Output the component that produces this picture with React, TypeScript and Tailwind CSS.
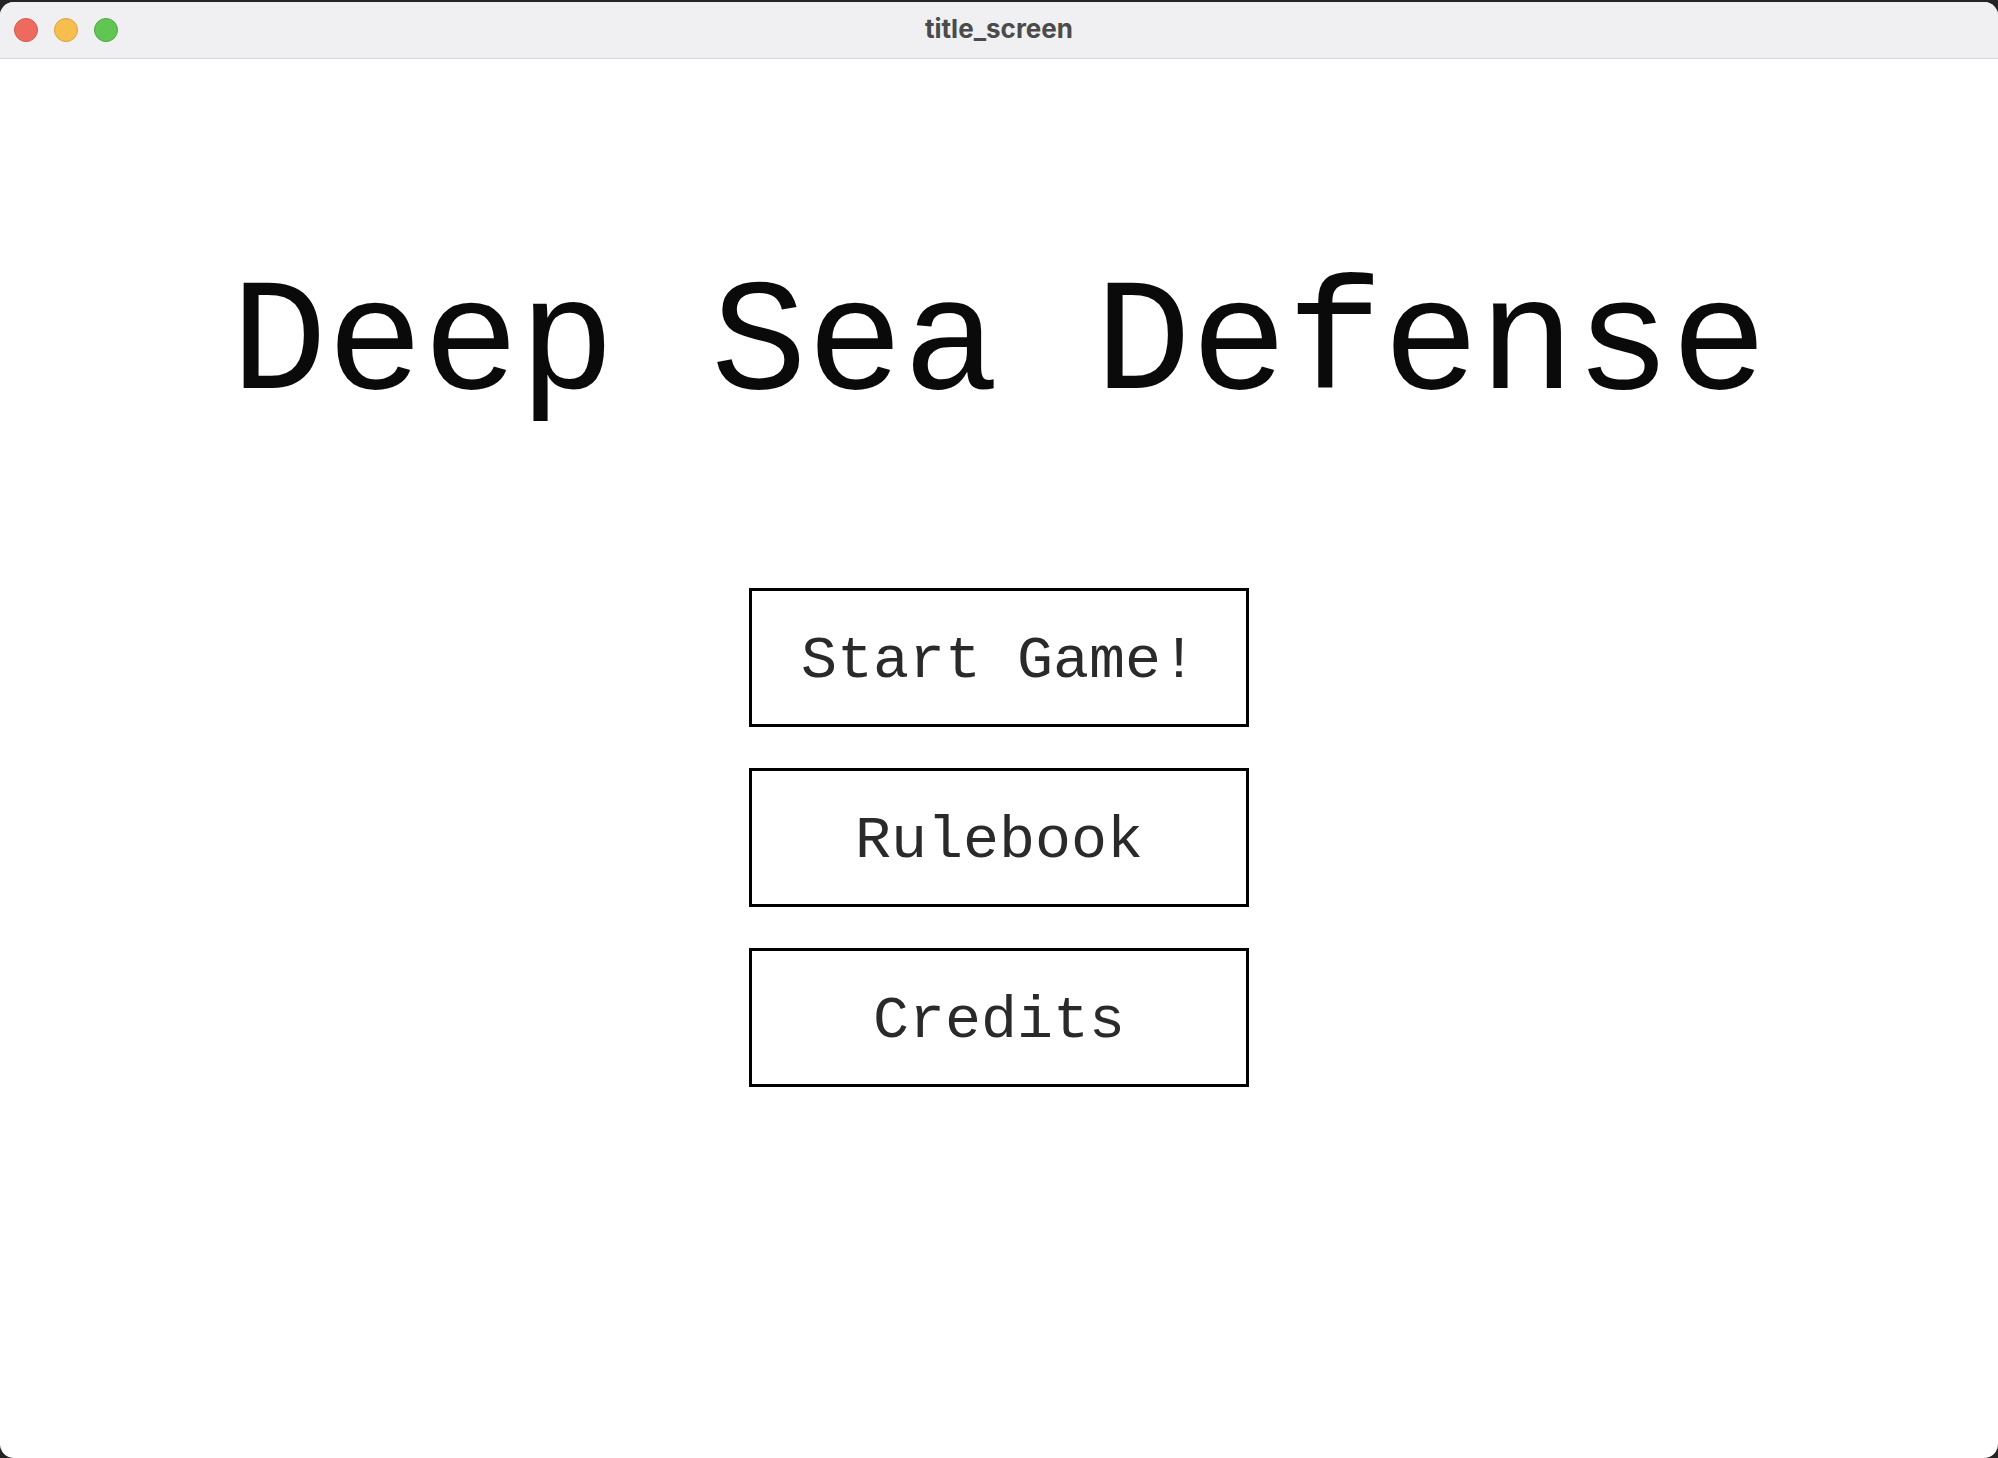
import React from "react";

// no serif mono in the sandbox; Liberation Mono has Courier New's metrics
const mono = { fontFamily: '"Liberation Mono", "Courier New", monospace' };

function TrafficLights() {
  return (
    <div className="flex items-center gap-[16px] pl-[14px]">
      <span className="block h-[24px] w-[24px] rounded-full border border-[#d5584d] bg-[#ee6a5f]" />
      <span className="block h-[24px] w-[24px] rounded-full border border-[#dba23b] bg-[#f6be4f]" />
      <span className="block h-[24px] w-[24px] rounded-full border border-[#4ea83f] bg-[#61c554]" />
    </div>
  );
}

function MenuButton({ label }: { label: string }) {
  return (
    <button
      type="button"
      className="flex h-[139px] w-[500px] items-center justify-center border-[3px] border-black bg-white pt-[6px] text-[60px] leading-none text-[#2a2a2a]"
      style={mono}
    >
      {label}
    </button>
  );
}

export default function App() {
  return (
    <div className="h-[1458px] w-[1998px] bg-[#242424] pt-[2px]">
      <div className="flex h-[1456px] w-full flex-col overflow-hidden rounded-[14px] bg-white">
        <div className="relative flex h-[57px] shrink-0 items-center border-b border-[#d6d6d8] bg-[#f0f0f2]">
          <TrafficLights />
          <div
            className="absolute inset-0 flex items-center justify-center pb-[3px] text-[26px] font-bold text-[#4b4b4b]"
            style={{ fontFamily: 'Inter, "Liberation Sans", sans-serif' }}
          >
            title_screen
          </div>
        </div>
        <main className="flex flex-col items-center">
          <h1 className="mt-[207px] text-[160px] font-normal leading-none text-[#0a0a0a]" style={mono}>
            Deep Sea Defense
          </h1>
          <div className="mt-[162px] flex flex-col items-center gap-[41px]">
            <MenuButton label="Start Game!" />
            <MenuButton label="Rulebook" />
            <MenuButton label="Credits" />
          </div>
        </main>
      </div>
    </div>
  );
}
